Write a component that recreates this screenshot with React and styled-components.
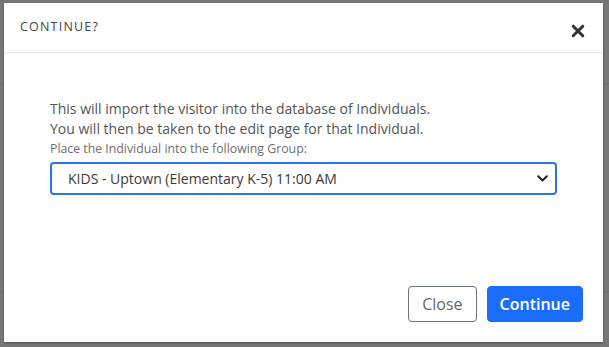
import React, { useState } from 'react';
import styled, { createGlobalStyle } from 'styled-components';

const GlobalStyle = createGlobalStyle`
  html, body {
    margin: 0;
    padding: 0;
  }
  body {
    font-family: "Open Sans", "Noto Sans", sans-serif;
    background-color: #767676;
    background-image:
      linear-gradient(#6c6c6c, #6c6c6c),
      linear-gradient(#6c6c6c, #6c6c6c);
    background-size: 100% 1px, 100% 1px;
    background-position: 0 83px, 0 291px;
    background-repeat: no-repeat;
  }
`;

const Backdrop = styled.div`
  width: 609px;
  height: 347px;
  box-sizing: border-box;
  padding: 3px 6px 5px 4px;
`;

const Dialog = styled.div`
  width: 599px;
  height: 339px;
  background: #fff;
  display: flex;
  flex-direction: column;
  box-shadow: 0 1px 2px rgba(0, 0, 0, 0.35);
`;

const Header = styled.div`
  height: 50px;
  box-sizing: border-box;
  display: flex;
  align-items: center;
  justify-content: space-between;
  padding: 0 18px 0 16px;
  border-bottom: 1px solid #e6e6e6;
`;

const Title = styled.h5`
  margin: 0;
  margin-top: -2px;
  font-size: 12.5px;
  font-weight: 400;
  letter-spacing: 1.2px;
  color: #444;
  text-transform: uppercase;
`;

const CloseX = styled.button`
  border: 0;
  background: none;
  padding: 0;
  margin-top: 6px;
  width: 14px;
  height: 14px;
  display: flex;
  cursor: pointer;
`;

const Body = styled.div`
  flex: 1;
  padding: 46px 46px 0;
`;

const Text = styled.p`
  margin: 0;
  font-size: 14px;
  line-height: 19.5px;
  color: #555;
`;

const Label = styled.label`
  display: block;
  margin-top: 3px;
  font-size: 12.3px;
  line-height: 16px;
  color: #6e6e6e;
`;

const SelectWrap = styled.div`
  position: relative;
  margin-top: 5px;
`;

const Select = styled.select`
  appearance: none;
  width: 100%;
  height: 33px;
  box-sizing: border-box;
  border: 2px solid #2f74ec;
  border-radius: 4px;
  padding: 0 30px 0 16px;
  font-family: inherit;
  font-size: 14px;
  color: #3a3a3a;
  background: #fff;
  outline: none;
`;

const Chevron = styled.svg`
  position: absolute;
  right: 9px;
  top: 13px;
  pointer-events: none;
`;

const Footer = styled.div`
  display: flex;
  justify-content: flex-end;
  gap: 10px;
  padding: 0 20px 20px;
`;

const Button = styled.button`
  height: 36px;
  box-sizing: border-box;
  padding: 0 ${p => (p.$primary ? '12px' : '13px')};
  border-radius: 4px;
  font-family: inherit;
  font-size: 16px;
  font-weight: ${p => (p.$primary ? 600 : 400)};
  border: 1px solid ${p => (p.$primary ? '#1a6dfb' : '#6c757d')};
  background: ${p => (p.$primary ? '#1a6dfb' : '#fff')};
  color: ${p => (p.$primary ? '#fff' : '#666')};
  cursor: pointer;
`;

const groups = [
  'KIDS - Uptown (Elementary K-5) 11:00 AM',
  'KIDS - Uptown (Preschool) 11:00 AM',
  'KIDS - Downtown (Elementary K-5) 9:30 AM',
];

export default function App() {
  const [group, setGroup] = useState(groups[0]);

  return (
    <>
      <GlobalStyle />
      <Backdrop>
        <Dialog>
          <Header>
            <Title>Continue?</Title>
            <CloseX aria-label="Close">
              <svg width="14" height="14" viewBox="0 0 14 14">
                <path d="M2.2 2.2 L11.8 11.8 M11.8 2.2 L2.2 11.8" stroke="#333" strokeWidth="3" strokeLinecap="round" />
              </svg>
            </CloseX>
          </Header>
          <Body>
            <Text>This will import the visitor into the database of Individuals.</Text>
            <Text>You will then be taken to the edit page for that Individual.</Text>
            <Label htmlFor="group">Place the Individual into the following Group:</Label>
            <SelectWrap>
              <Select id="group" value={group} onChange={e => setGroup(e.target.value)}>
                {groups.map(g => (
                  <option key={g} value={g}>{g}</option>
                ))}
              </Select>
              <Chevron width="11" height="7" viewBox="0 0 11 7">
                <path d="M1.2 1.2 L5.5 5.5 L9.8 1.2" fill="none" stroke="#222" strokeWidth="2" strokeLinecap="round" strokeLinejoin="round" />
              </Chevron>
            </SelectWrap>
          </Body>
          <Footer>
            <Button>Close</Button>
            <Button $primary>Continue</Button>
          </Footer>
        </Dialog>
      </Backdrop>
    </>
  );
}
